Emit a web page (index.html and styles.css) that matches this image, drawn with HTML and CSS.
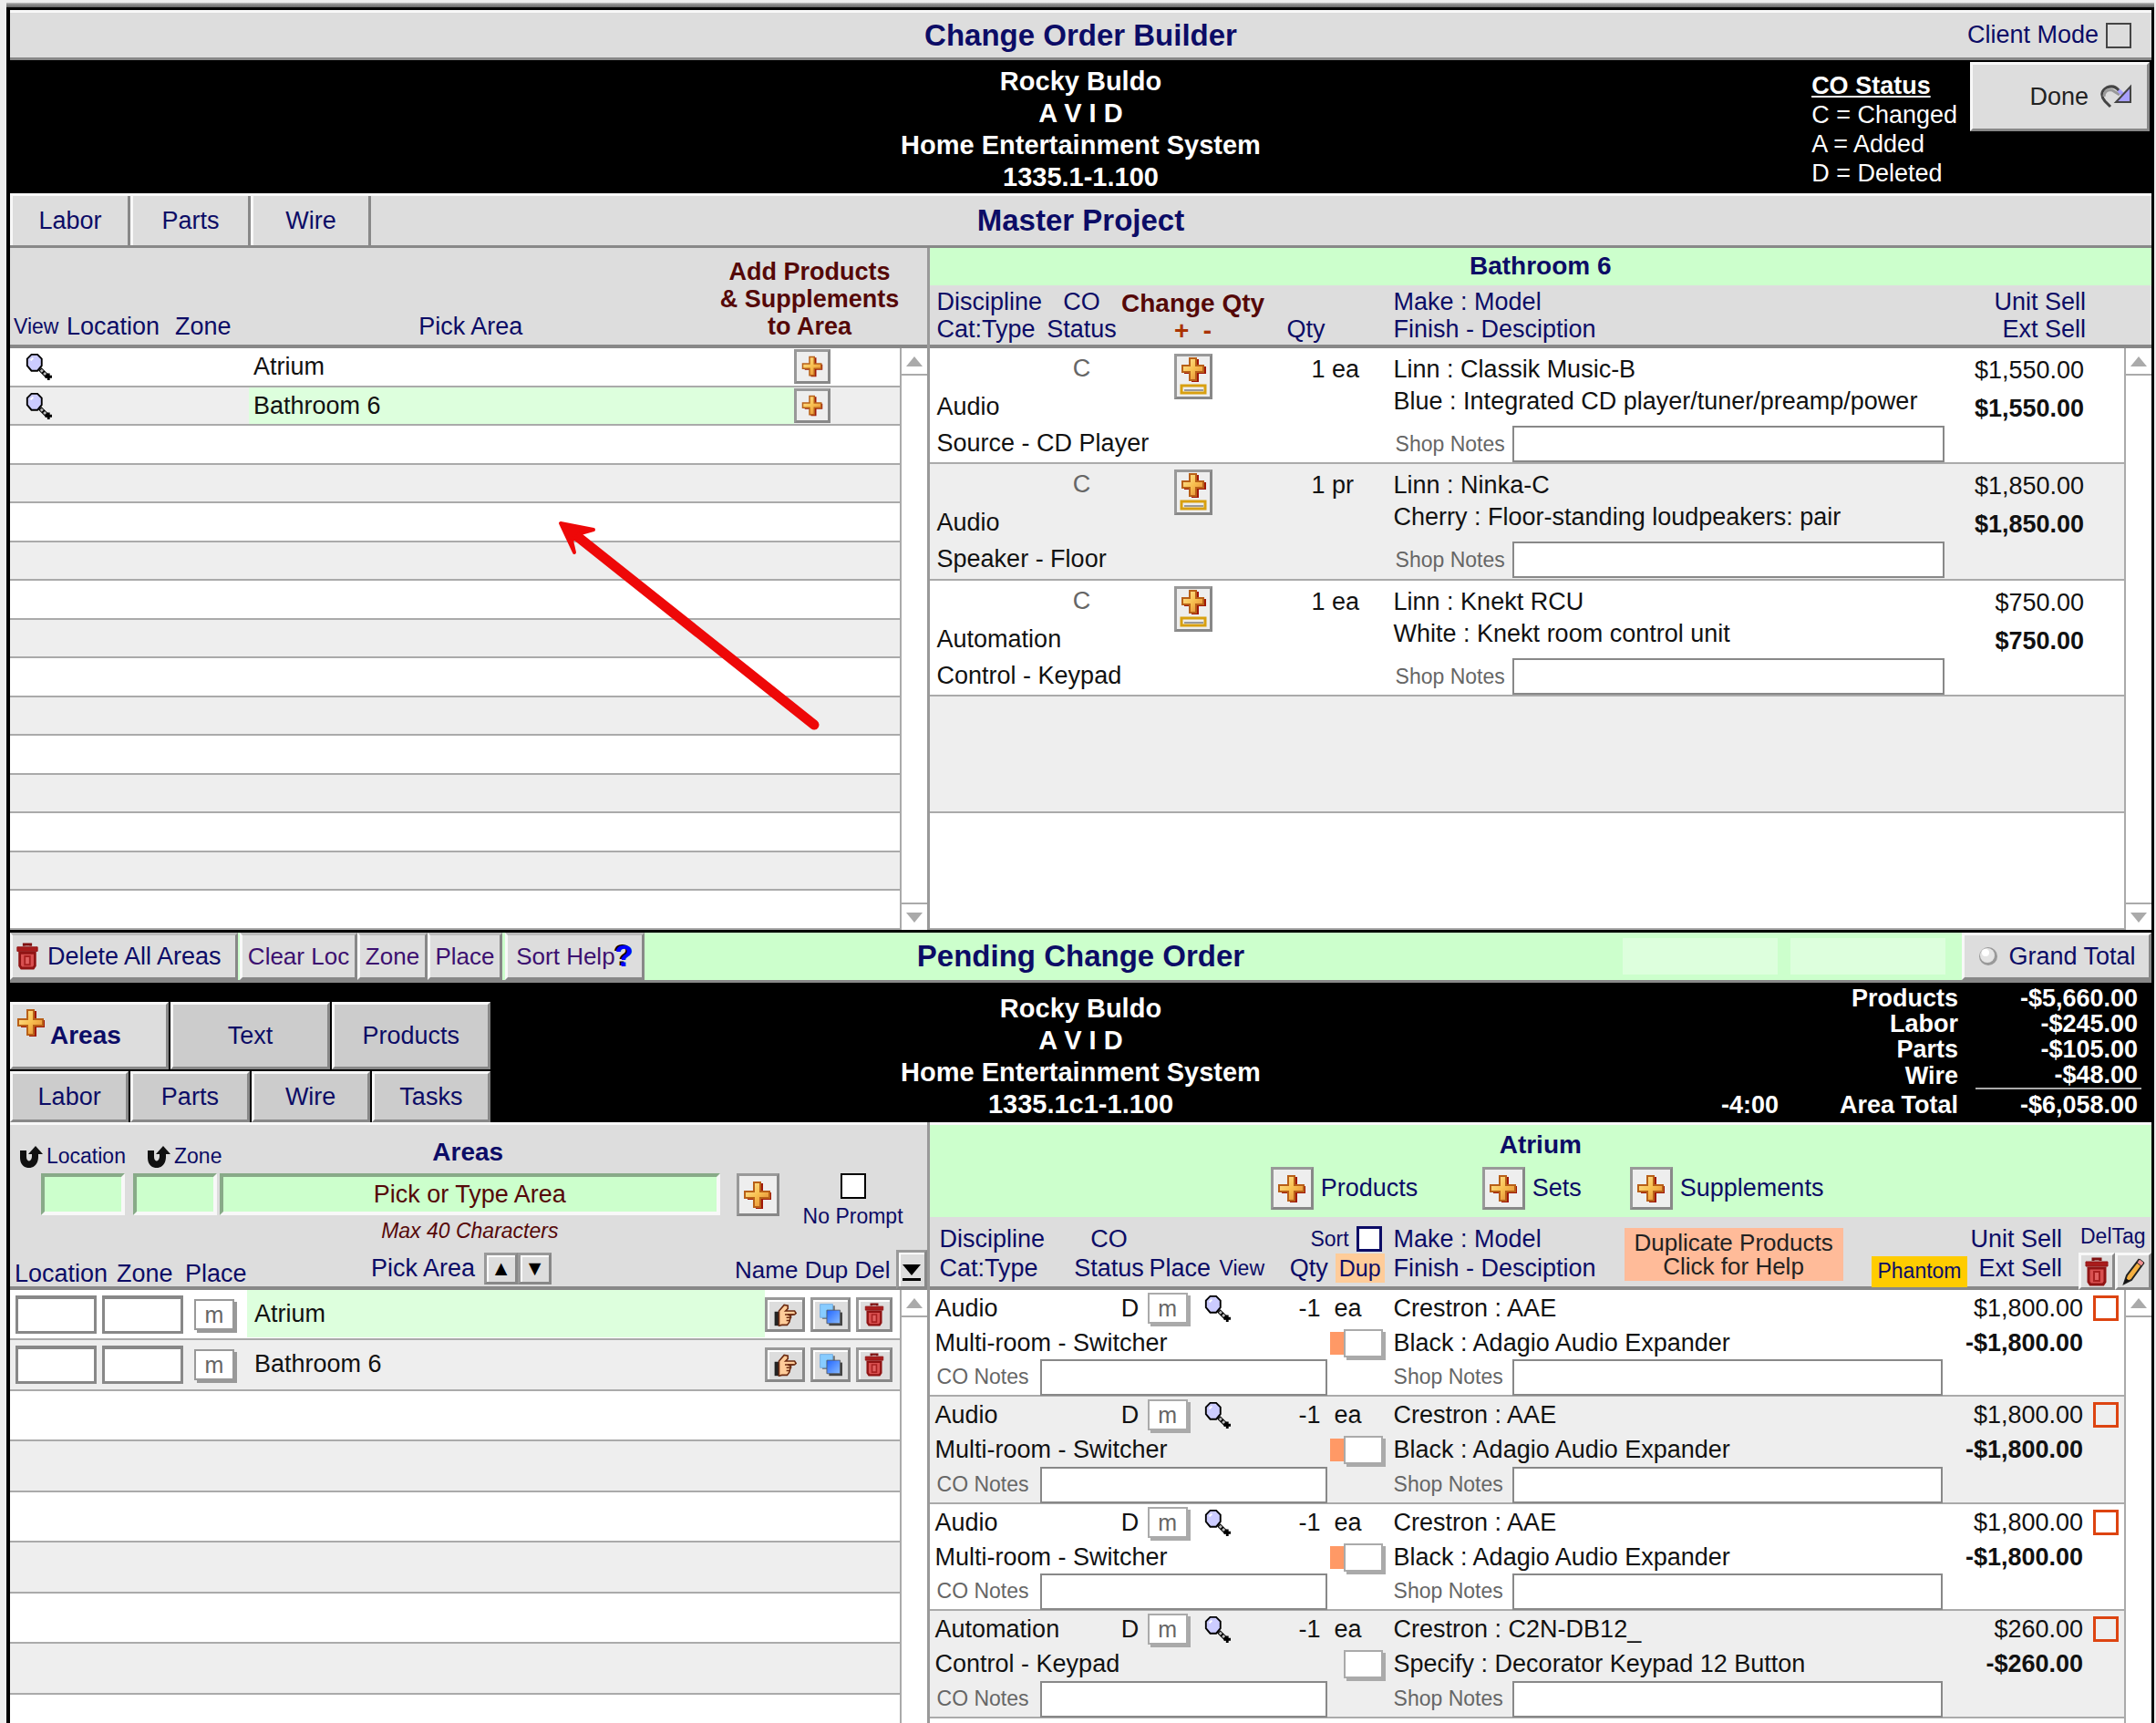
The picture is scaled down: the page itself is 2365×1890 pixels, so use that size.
FILE: index.html
```html
<!DOCTYPE html>
<html lang="en">
<head>
    <meta charset="UTF-8">
    <meta name="viewport" content="width=device-width, initial-scale=1.0">
    <title>Change Order Builder</title>
    <link rel="stylesheet" href="styles.css">
</head>
<body>
    <svg class="sprite" aria-hidden="true">
        <defs>
            <linearGradient id="gold" x1="0" y1="0" x2="1" y2="1">
                <stop offset="0" stop-color="#ffe9a0"/>
                <stop offset="0.5" stop-color="#f8c050"/>
                <stop offset="1" stop-color="#e08030"/>
            </linearGradient>
            <linearGradient id="blue" x1="0" y1="0" x2="1" y2="1">
                <stop offset="0" stop-color="#2266ff"/>
                <stop offset="1" stop-color="#88bbff"/>
            </linearGradient>
        </defs>
        <symbol id="plus" viewBox="0 0 32 32">
            <path d="M14 3h8v10h9v8h-9v10h-8V21H5v-8h9z" fill="#a01808"/>
            <path d="M12 2h7v10h10v7H19v10h-7V19H2v-7h10z" fill="url(#gold)" stroke="#b86018" stroke-width="2"/>
        </symbol>
        <symbol id="plusminus" viewBox="0 0 32 42">
            <path d="M14 2h8v8h8v8h-8v9h-8v-9H6v-8h8z" fill="#a01808"/>
            <path d="M12 1h7v8h8v7h-8v9h-7v-9H4V9h8z" fill="url(#gold)" stroke="#b86018" stroke-width="2"/>
            <path d="M3 31h26v8H3z" fill="#eee" stroke="#d8a010" stroke-width="3"/>
            <path d="M6 36h21" stroke="#999" stroke-width="2"/>
        </symbol>
        <symbol id="glass" viewBox="0 0 32 32">
            <path d="M18 19l9 9" stroke="#000" stroke-width="5"/>
            <path d="M19 20l7 7" stroke="#bbb" stroke-width="3" stroke-dasharray="3 2"/>
            <path d="M28 24v8M24 28h8" stroke="#000" stroke-width="3"/>
            <path d="M8 2h7l5 5v8l-5 6H8l-5-6V7z" fill="#ccccff" stroke="#000" stroke-width="2"/>
            <path d="M7 9l3-3" stroke="#fff" stroke-width="2"/>
        </symbol>
        <symbol id="trash" viewBox="0 0 28 32">
            <path d="M10 4V2h8v2" fill="none" stroke="#801010" stroke-width="3"/>
            <path d="M2 5h24v5H2z" fill="#a81c1c" stroke="#901414" stroke-width="1"/>
            <path d="M5 12h18v15l-2 3H7l-2-3z" fill="#d85050" stroke="#901414" stroke-width="3"/>
            <path d="M11 16h6v10h-6z" fill="#e06060" stroke="#a82020" stroke-width="2"/>
        </symbol>
        <symbol id="hand" viewBox="0 0 32 32">
            <path d="M2 12h6v19H2z" fill="#222"/>
            <path d="M8 11l7-8 5 1v4l-3 3h12l2 3-2 2H20l4 2-1 4-1 4-3 4h-7l-4 1z" fill="#ffcc99" stroke="#6b2a10" stroke-width="2"/>
            <path d="M16 16h12M18 20h7M18 24h5" stroke="#6b2a10" stroke-width="2"/>
        </symbol>
        <symbol id="dup" viewBox="0 0 32 32">
            <path d="M5 4h17v18H5z" fill="#777"/>
            <path d="M2 2h17v18H2z" fill="#88ccff" stroke="#6aa8e0" stroke-width="1"/>
            <path d="M14 13h18v18H14z" fill="#444"/>
            <path d="M11 10h18v18H11z" fill="url(#blue)" stroke="#555" stroke-width="1"/>
        </symbol>
        <symbol id="pencil" viewBox="0 0 28 32">
            <path d="M4 29l3-9L20 3l5 4-13 18z" fill="#f5b040" stroke="#222" stroke-width="2"/>
            <path d="M18 6l3-4 5 4-3 4z" fill="#f09090" stroke="#222" stroke-width="1"/>
            <path d="M4 29l2-6 4 3z" fill="#111"/>
        </symbol>
        <symbol id="back" viewBox="0 0 36 28">
            <path d="M12 25L6 19C1 13 2 7 8 4c5-2 10-1 13 3l5 5" fill="none" stroke="#444" stroke-width="3"/>
            <path d="M5 14c0-5 3-8 9-7l8 5" fill="none" stroke="#999" stroke-width="3"/>
            <path d="M21 7l6 6" stroke="#a8a0ff" stroke-width="4"/>
            <path d="M34 3v17H18z" fill="#a8a0ff" stroke="#444" stroke-width="2"/>
        </symbol>
        <symbol id="uturn" viewBox="0 0 28 24">
            <path d="M2 5h7v7c0 6 6 6 6-1V9h-4l8-9 8 9h-5v3c0 16-20 16-20 1z" fill="#111"/>
        </symbol>
        <symbol id="lamp" viewBox="0 0 24 24">
            <circle cx="12" cy="12" r="10" fill="#999"/>
            <circle cx="11" cy="11" r="8" fill="#e4e4e4"/>
            <circle cx="9" cy="8" r="4" fill="#fff"/>
        </symbol>
    </svg>

    <div class="topstrip"></div>
    <main class="app">
        <header class="bar title-bar">
            <span></span>
            <h1>Change Order Builder</h1>
            <label class="client-mode">Client Mode <input type="checkbox" class="check"></label>
        </header>

        <section class="banner">
            <span></span>
            <div class="project">
                <p>Rocky Buldo</p>
                <p>A V I D</p>
                <p>Home Entertainment System</p>
                <p>1335.1-1.100</p>
            </div>
            <div class="banner-right">
                <div class="legend">
                    <h2>CO Status</h2>
                    <p>C = Changed</p>
                    <p>A = Added</p>
                    <p>D = Deleted</p>
                </div>
                <button class="btn done">Done <svg><use href="#back"/></svg></button>
            </div>
        </section>

        <section class="bar master-bar">
            <nav class="tabs">
                <button class="btn">Labor</button>
                <button class="btn">Parts</button>
                <button class="btn">Wire</button>
            </nav>
            <h1>Master Project</h1>
            <span></span>
        </section>

        <section class="split">
            <div class="panel left">
                <div class="head pick-head">
                    <span class="small">View</span>
                    <span>Location</span>
                    <span>Zone</span>
                    <span class="center">Pick Area</span>
                    <strong>Add Products<br>&amp; Supplements<br>to Area</strong>
                </div>
                <div class="body">
                    <table class="rows pick-rows">
                        <tr><td><button class="icon" aria-label="View"><svg><use href="#glass"/></svg></button></td><td></td><td class="name">Atrium</td><td><button class="btn add" aria-label="Add to Atrium"><svg><use href="#plus"/></svg></button></td></tr>
                        <tr><td><button class="icon" aria-label="View"><svg><use href="#glass"/></svg></button></td><td></td><td class="name picked">Bathroom 6</td><td><button class="btn add" aria-label="Add to Bathroom 6"><svg><use href="#plus"/></svg></button></td></tr>
                        <tr></tr><tr></tr><tr></tr><tr></tr><tr></tr><tr></tr><tr></tr>
                        <tr></tr><tr></tr><tr></tr><tr></tr><tr></tr><tr></tr>
                    </table>
                    <div class="scroll"><button class="up" aria-label="Scroll up"></button><button class="down" aria-label="Scroll down"></button></div>
                    <svg class="pointer" viewBox="0 0 300 240">
                        <path d="M24 20L288 230" stroke="#ee0808" stroke-width="11" stroke-linecap="round"/>
                        <path d="M10 9L46 16L32 20L22 28L25 41Z" fill="#ee0808" stroke="#ee0808" stroke-width="4" stroke-linejoin="round"/>
                    </svg>
                </div>
            </div>

            <div class="panel">
                <h2 class="area-title">Bathroom 6</h2>
                <div class="head master-grid master-head">
                    <span>Discipline<br>Cat:Type</span>
                    <span class="center">CO<br>Status</span>
                    <strong>Change Qty<br><b>+ &nbsp;-</b></strong>
                    <span class="qty"><br>Qty</span>
                    <span>Make : Model<br>Finish - Desciption</span>
                    <span class="right">Unit Sell<br>Ext Sell</span>
                </div>
                <div class="body">
                    <table class="rows master-rows">
                        <tr class="master-grid">
                            <td class="disc">Audio<br>Source - CD Player</td>
                            <td class="status">C</td>
                            <td class="change"><button class="btn pm" aria-label="Change quantity"><svg><use href="#plusminus"/></svg></button></td>
                            <td class="count">1 ea</td>
                            <td class="make">Linn : Classik Music-B<br>Blue : Integrated CD player/tuner/preamp/power
                                <div class="note"><label for="m1">Shop Notes</label><input type="text" id="m1"></div></td>
                            <td class="price">$1,550.00<br><b>$1,550.00</b></td>
                        </tr>
                        <tr class="master-grid">
                            <td class="disc">Audio<br>Speaker - Floor</td>
                            <td class="status">C</td>
                            <td class="change"><button class="btn pm" aria-label="Change quantity"><svg><use href="#plusminus"/></svg></button></td>
                            <td class="count">1 pr</td>
                            <td class="make">Linn : Ninka-C<br>Cherry : Floor-standing loudpeakers: pair
                                <div class="note"><label for="m2">Shop Notes</label><input type="text" id="m2"></div></td>
                            <td class="price">$1,850.00<br><b>$1,850.00</b></td>
                        </tr>
                        <tr class="master-grid">
                            <td class="disc">Automation<br>Control - Keypad</td>
                            <td class="status">C</td>
                            <td class="change"><button class="btn pm" aria-label="Change quantity"><svg><use href="#plusminus"/></svg></button></td>
                            <td class="count">1 ea</td>
                            <td class="make">Linn : Knekt RCU<br>White : Knekt room control unit
                                <div class="note"><label for="m3">Shop Notes</label><input type="text" id="m3"></div></td>
                            <td class="price">$750.00<br><b>$750.00</b></td>
                        </tr>
                        <tr></tr>
                        <tr></tr>
                    </table>
                    <div class="scroll"><button class="up" aria-label="Scroll up"></button><button class="down" aria-label="Scroll down"></button></div>
                </div>
            </div>
        </section>

        <section class="bar pending-bar">
            <nav class="tools">
                <button class="btn delete-all"><svg><use href="#trash"/></svg>Delete All Areas</button>
                <button class="btn clear">Clear Loc</button>
                <button class="btn">Zone</button>
                <button class="btn">Place</button>
                <button class="btn sort-help">Sort Help<b>?</b></button>
            </nav>
            <h1>Pending Change Order</h1>
            <div class="pending-right">
                <span class="blank"></span>
                <span class="blank"></span>
                <button class="btn grand"><svg><use href="#lamp"/></svg>Grand Total</button>
            </div>
        </section>

        <section class="banner pending-banner">
            <nav class="sections">
                <div>
                    <button class="btn current"><svg><use href="#plus"/></svg>Areas</button>
                    <button class="btn">Text</button>
                    <button class="btn">Products</button>
                </div>
                <div>
                    <button class="btn">Labor</button>
                    <button class="btn">Parts</button>
                    <button class="btn">Wire</button>
                    <button class="btn">Tasks</button>
                </div>
            </nav>
            <div class="project">
                <p>Rocky Buldo</p>
                <p>A V I D</p>
                <p>Home Entertainment System</p>
                <p>1335.1c1-1.100</p>
            </div>
            <table class="totals">
                <tr><td></td><th>Products</th><td>-$5,660.00</td></tr>
                <tr><td></td><th>Labor</th><td>-$245.00</td></tr>
                <tr><td></td><th>Parts</th><td>-$105.00</td></tr>
                <tr><td></td><th>Wire</th><td>-$48.00</td></tr>
                <tr class="sum"><td>-4:00</td><th>Area Total</th><td>-$6,058.00</td></tr>
            </table>
        </section>

        <section class="split pending">
            <div class="panel left">
                <div class="head area-head">
                    <div class="area-labels">
                        <label for="loc"><svg><use href="#uturn"/></svg>Location</label>
                        <label for="zone"><svg><use href="#uturn"/></svg>Zone</label>
                        <h2>Areas</h2>
                    </div>
                    <div class="area-form">
                        <input type="text" id="loc">
                        <input type="text" id="zone">
                        <div class="area-name">
                            <input type="text" value="Pick or Type Area" aria-label="Area">
                            <em>Max 40 Characters</em>
                        </div>
                        <button class="btn big-add" aria-label="Add area"><svg><use href="#plus"/></svg></button>
                        <label class="prompt"><input type="checkbox" class="check">No Prompt</label>
                    </div>
                    <div class="area-cols">
                        <span>Location</span>
                        <span>Zone</span>
                        <span>Place</span>
                        <div class="pick">Pick Area
                            <button class="btn" aria-label="Sort up">&#9650;</button><button class="btn" aria-label="Sort down">&#9660;</button>
                        </div>
                        <span class="actions">Name Dup Del</span>
                        <button class="btn last" aria-label="Go to last"><i></i></button>
                    </div>
                </div>
                <div class="body">
                    <table class="rows area-rows">
                        <tr>
                            <td><input type="text" aria-label="Location"></td><td><input type="text" aria-label="Zone"></td>
                            <td><button class="m">m</button></td><td class="name picked">Atrium</td>
                            <td class="acts"><button class="btn" aria-label="Name"><svg><use href="#hand"/></svg></button><button class="btn" aria-label="Duplicate"><svg><use href="#dup"/></svg></button><button class="btn" aria-label="Delete"><svg><use href="#trash"/></svg></button></td>
                        </tr>
                        <tr>
                            <td><input type="text" aria-label="Location"></td><td><input type="text" aria-label="Zone"></td>
                            <td><button class="m">m</button></td><td class="name">Bathroom 6</td>
                            <td class="acts"><button class="btn" aria-label="Name"><svg><use href="#hand"/></svg></button><button class="btn" aria-label="Duplicate"><svg><use href="#dup"/></svg></button><button class="btn" aria-label="Delete"><svg><use href="#trash"/></svg></button></td>
                        </tr>
                        <tr></tr><tr></tr><tr></tr><tr></tr><tr></tr><tr></tr><tr></tr>
                    </table>
                    <div class="scroll"><button class="up" aria-label="Scroll up"></button></div>
                </div>
            </div>

            <div class="panel">
                <div class="area-title product-title">
                    <h2>Atrium</h2>
                    <div class="adders">
                        <label><button class="btn big-add"><svg><use href="#plus"/></svg></button>Products</label>
                        <label><button class="btn big-add"><svg><use href="#plus"/></svg></button>Sets</label>
                        <label><button class="btn big-add"><svg><use href="#plus"/></svg></button>Supplements</label>
                    </div>
                </div>
                <div class="head product-head">
                    <span>Discipline<br>Cat:Type</span>
                    <span class="center">CO<br>Status</span>
                    <span><br>Place</span>
                    <span class="view"><br>View</span>
                    <div class="sort">
                        <label>Sort <input type="checkbox" class="check"></label>
                        <p>Qty <a href="#dups">Dup</a></p>
                    </div>
                    <span>Make : Model<br>Finish - Desciption</span>
                    <button class="dup-help">Duplicate Products<br>Click for Help</button>
                    <span class="phantom">Phantom</span>
                    <span class="sell">Unit Sell<br>Ext Sell</span>
                    <div class="deltag">
                        <span>DelTag</span>
                        <button class="btn" aria-label="Delete tagged"><svg><use href="#trash"/></svg></button><button class="btn" aria-label="Edit tagged"><svg><use href="#pencil"/></svg></button>
                    </div>
                </div>
                <div class="body">
                    <table class="rows product-rows">
                        <tr>
                            <td>Audio</td><td>D</td><td><button class="m">m</button></td>
                            <td><button class="icon" aria-label="View"><svg><use href="#glass"/></svg></button></td>
                            <td class="count">-1 &nbsp;ea</td><td>Crestron : AAE</td><td class="price">$1,800.00</td>
                            <td class="tag"><input type="checkbox" class="check" aria-label="Tag"></td>
                            <td class="type">Multi-room - Switcher</td>
                            <td class="dupe"><i></i><input type="text" aria-label="Duplicate"></td>
                            <td>Black : Adagio Audio Expander</td><td class="price"><b>-$1,800.00</b></td>
                            <td class="note co"><label for="c1">CO Notes</label><input type="text" id="c1"></td>
                            <td class="note shop"><label for="s1">Shop Notes</label><input type="text" id="s1"></td>
                        </tr>
                        <tr>
                            <td>Audio</td><td>D</td><td><button class="m">m</button></td>
                            <td><button class="icon" aria-label="View"><svg><use href="#glass"/></svg></button></td>
                            <td class="count">-1 &nbsp;ea</td><td>Crestron : AAE</td><td class="price">$1,800.00</td>
                            <td class="tag"><input type="checkbox" class="check" aria-label="Tag"></td>
                            <td class="type">Multi-room - Switcher</td>
                            <td class="dupe"><i></i><input type="text" aria-label="Duplicate"></td>
                            <td>Black : Adagio Audio Expander</td><td class="price"><b>-$1,800.00</b></td>
                            <td class="note co"><label for="c2">CO Notes</label><input type="text" id="c2"></td>
                            <td class="note shop"><label for="s2">Shop Notes</label><input type="text" id="s2"></td>
                        </tr>
                        <tr>
                            <td>Audio</td><td>D</td><td><button class="m">m</button></td>
                            <td><button class="icon" aria-label="View"><svg><use href="#glass"/></svg></button></td>
                            <td class="count">-1 &nbsp;ea</td><td>Crestron : AAE</td><td class="price">$1,800.00</td>
                            <td class="tag"><input type="checkbox" class="check" aria-label="Tag"></td>
                            <td class="type">Multi-room - Switcher</td>
                            <td class="dupe"><i></i><input type="text" aria-label="Duplicate"></td>
                            <td>Black : Adagio Audio Expander</td><td class="price"><b>-$1,800.00</b></td>
                            <td class="note co"><label for="c3">CO Notes</label><input type="text" id="c3"></td>
                            <td class="note shop"><label for="s3">Shop Notes</label><input type="text" id="s3"></td>
                        </tr>
                        <tr>
                            <td>Automation</td><td>D</td><td><button class="m">m</button></td>
                            <td><button class="icon" aria-label="View"><svg><use href="#glass"/></svg></button></td>
                            <td class="count">-1 &nbsp;ea</td><td>Crestron : C2N-DB12_</td><td class="price">$260.00</td>
                            <td class="tag"><input type="checkbox" class="check" aria-label="Tag"></td>
                            <td class="type">Control - Keypad</td>
                            <td class="dupe"><input type="text" aria-label="Duplicate"></td>
                            <td>Specify : Decorator Keypad 12 Button</td><td class="price"><b>-$260.00</b></td>
                            <td class="note co"><label for="c4">CO Notes</label><input type="text" id="c4"></td>
                            <td class="note shop"><label for="s4">Shop Notes</label><input type="text" id="s4"></td>
                        </tr>
                    </table>
                    <div class="scroll"><button class="up" aria-label="Scroll up"></button></div>
                </div>
            </div>
        </section>
    </main>
</body>
</html>
```
FILE: styles.css
```css
* {
    box-sizing: border-box;
}
body {
    margin: 0;
    padding: 0 2px 0 7px;
    height: 100vh;
    display: flex;
    flex-direction: column;
    overflow: hidden;
    background: #eee;
    color: #111;
    font-family: "Liberation Sans", Arial, sans-serif;
    font-size: 27px;
    white-space: nowrap;
}
h1, h2, p {
    margin: 0;
}
h1 {
    font-size: 33px;
    line-height: 40px;
    color: #0c0c66;
}
h2 {
    font-size: 28px;
    line-height: 40px;
    color: #0c0c66;
}
button, input {
    font-family: inherit;
    font-size: inherit;
    color: inherit;
    margin: 0;
    padding: 0;
    border-radius: 0;
    min-width: 0;
}
svg {
    display: block;
    flex: none;
}
.sprite {
    position: absolute;
    width: 0;
    height: 0;
}
.center {
    text-align: center;
}
.right {
    text-align: right;
}
.topstrip {
    flex: none;
    height: 8px;
    background: linear-gradient(#eee 30%, #999 50%, #666);
}
.app {
    flex: 1;
    min-height: 0;
    display: flex;
    flex-direction: column;
    border: solid #000;
    border-width: 3px 3px 0 4px;
    background: #000;
}

/* buttons and small controls */
.btn {
    display: flex;
    align-items: center;
    justify-content: center;
    background: #ddd;
    color: #0c0c66;
    border: 3px solid;
    border-color: #f8f8f8 #888 #888 #f8f8f8;
    cursor: pointer;
}
.icon {
    display: block;
    background: none;
    border: none;
}
.icon svg {
    width: 30px;
    height: 30px;
}
.check {
    appearance: none;
    flex: none;
    width: 28px;
    height: 28px;
    border: 2px solid #000;
    background: #fff;
}
.add, .big-add, .pm {
    background: #eee;
    border-color: #999 #888 #888 #999;
}
.add {
    width: 40px;
    height: 38px;
}
.add svg {
    width: 24px;
    height: 24px;
}
.big-add {
    flex: none;
    width: 47px;
    height: 47px;
}
.big-add svg {
    width: 32px;
    height: 32px;
}
.m {
    width: 44px;
    height: 34px;
    font-size: 25px;
    line-height: 28px;
    color: #666;
    background: #fff;
    border: 2px solid #999;
    box-shadow: 3px 3px 0 #999;
}

/* bars */
.bar {
    flex: none;
    display: grid;
    grid-template-columns: 1fr auto 1fr;
    align-items: center;
    background: #ddd;
    border-top: 3px solid #f8f8f8;
    border-bottom: 3px solid #888;
}
.title-bar {
    height: 55px;
}
.client-mode {
    display: flex;
    justify-content: flex-end;
    align-items: center;
    gap: 8px;
    padding-right: 22px;
    color: #0c0c66;
}
.client-mode .check {
    border-color: #444;
    background: #ddd;
}
.master-bar {
    height: 60px;
    align-items: stretch;
}
.master-bar h1 {
    align-self: center;
}
.tabs {
    display: flex;
}
.tabs .btn {
    width: 132px;
    border-top: none;
    border-bottom: none;
}

/* black banners */
.banner {
    flex: none;
    min-height: 146px;
    display: grid;
    grid-template-columns: 1fr auto 1fr;
    background: #000;
    color: #fff;
}
.project {
    padding-top: 6px;
    text-align: center;
    font-size: 29px;
    font-weight: bold;
    line-height: 35px;
}
.banner-right {
    display: flex;
    justify-content: flex-end;
    align-items: flex-start;
    gap: 14px;
    padding: 2px 2px 0 0;
}
.legend {
    padding-top: 10px;
    line-height: 32px;
}
.legend h2 {
    font-size: 27px;
    line-height: 32px;
    color: #fff;
    text-decoration: underline;
}
.done {
    width: 197px;
    height: 76px;
    justify-content: flex-end;
    gap: 12px;
    padding-right: 16px;
    color: #222;
}
.done svg {
    width: 36px;
    height: 28px;
}

/* two-column area */
.split {
    flex: none;
    display: grid;
    grid-template-columns: minmax(0, 1009fr) minmax(0, 1341fr);
}
.panel {
    display: flex;
    flex-direction: column;
    min-height: 0;
    background: #fff;
}
.left {
    border-right: 3px solid #999;
}
.head {
    flex: none;
    background: #ddd;
    color: #0c0c66;
    border-bottom: 4px solid #888;
}
.head strong {
    text-align: center;
    color: #550808;
}
.small {
    font-size: 23px;
}
.area-title {
    background: #ccffcc;
    text-align: center;
}
.body {
    flex: 1;
    display: flex;
    position: relative;
    min-height: 0;
}
.rows {
    flex: 1;
    display: block;
    border-collapse: collapse;
}
.rows tbody {
    display: block;
}
.rows tr {
    display: block;
    border-bottom: 2px solid #aaa;
}
.rows tr:nth-child(even) {
    background: #eee;
}
.rows td {
    display: block;
    padding: 0;
}
.scroll {
    width: 30px;
    display: flex;
    flex-direction: column;
    justify-content: space-between;
    border-left: 2px solid #aaa;
    background: #fff;
}
.scroll button {
    height: 30px;
    background: #fff;
    border: 0 solid #aaa;
    display: flex;
    align-items: center;
    justify-content: center;
}
.scroll .up {
    border-bottom-width: 2px;
}
.scroll .down {
    border-top-width: 2px;
}
.scroll button::before {
    content: "";
    border: 9px solid transparent;
    border-top-width: 0;
    border-bottom: 11px solid #aaa;
}
.scroll .down::before {
    border-bottom-width: 0;
    border-top: 11px solid #aaa;
}

/* master project, area list */
.pick-head {
    display: grid;
    grid-template-columns: 58px 119px 81px 1fr 257px;
    align-items: end;
    height: 110px;
    padding: 0 0 5px 4px;
    line-height: 30px;
}
.pick-rows {
    display: grid;
}
.pick-rows tbody {
    display: grid;
    grid-template-rows: repeat(15, 1fr);
}
.pick-rows tr {
    display: grid;
    grid-template-columns: 63px 199px 1fr 116px;
    align-items: center;
}
.pick-rows td:first-child {
    padding-left: 16px;
}
.name {
    padding-left: 5px !important;
    align-self: stretch;
    line-height: 40px;
}
.picked {
    background: #ddffdd;
}
.pointer {
    position: absolute;
    left: 594px;
    top: 183px;
    width: 300px;
    height: 240px;
}

/* master project, product list */
.split > .panel > h2.area-title {
    height: 41px;
}
.master-grid {
    display: grid;
    grid-template-columns: 118px 82px 162px 139px 1fr 150px;
    padding: 0 44px 0 8px;
}
.master-head {
    height: 69px;
    padding: 3px 72px 0 8px;
    line-height: 30px;
}
.master-head strong {
    font-size: 28px;
    padding-top: 2px;
}
.master-head b {
    color: #aa3300;
}
.qty {
    padding-left: 22px;
}
.master-rows tr {
    height: 127px;
}
.master-rows tr:nth-child(even), .master-rows tr:last-child {
    height: 128px;
}
.master-rows .master-grid {
    display: grid;
    grid-template-rows: 44px 1fr;
}
.master-rows td {
    grid-row: 1 / 3;
}
.master-rows .disc {
    grid-area: 2 / 1 / 3 / 3;
    line-height: 40px;
}
.master-rows .status {
    grid-area: 1 / 2;
    text-align: center;
    line-height: 44px;
    color: #666;
}
.change {
    padding-top: 6px !important;
}
.pm {
    width: 42px;
    height: 50px;
    margin: 0 auto;
}
.pm svg {
    width: 32px;
    height: 42px;
}
.master-rows .count {
    padding: 6px 0 0 49px;
    line-height: 35px;
}
.make {
    padding: 6px 3px 0 0 !important;
    line-height: 35px;
}
.make .note {
    margin-top: 9px;
}
.note {
    display: flex !important;
    align-items: center;
    font-size: 23px;
    color: #666;
}
.note label {
    flex: none;
    width: 130px;
    padding-left: 2px;
}
.note input {
    flex: 1;
    height: 40px;
    border: 2px solid #888;
    background: #fff;
}
.price {
    text-align: right;
}
.master-rows .price {
    padding-top: 3px;
    line-height: 42px;
}

/* pending change order */
.pending-bar {
    height: 55px;
    align-items: stretch;
    margin-top: 3px;
    background: #ccffcc;
    border-top: none;
}
.pending-bar h1 {
    align-self: center;
}
.tools {
    display: flex;
    font-size: 26px;
}
.tools .btn {
    color: #3c1070;
    padding: 0;
    border-top-color: #bbb;
}
.tools .delete-all {
    width: 250px;
    justify-content: flex-start;
    margin-right: 2px;
    padding-left: 3px;
    gap: 9px;
    font-size: 27px;
    color: #0c0c66;
}
.delete-all svg {
    width: 26px;
    height: 30px;
}
.tools .clear {
    width: 129px;
}
.tools .btn:nth-child(3) {
    width: 77px;
}
.tools .btn:nth-child(4) {
    width: 82px;
    margin-right: 3px;
}
.tools .sort-help {
    width: 153px;
}
.sort-help b {
    font-size: 33px;
    color: #0000ff;
    text-shadow: -2px -1px 0 #000;
}
.pending-right {
    display: flex;
    justify-content: flex-end;
    gap: 14px;
}
.blank {
    width: 170px;
    margin: 6px 0;
    background: #ddffdd;
}
.grand {
    width: 208px;
    gap: 10px;
    margin-left: 4px;
}
.grand svg {
    width: 24px;
    height: 24px;
}
.pending-banner {
    min-height: 153px;
}
.pending-banner .project {
    padding-top: 11px;
}
.sections {
    display: flex;
    flex-direction: column;
    gap: 2px;
    width: 527px;
    padding-top: 21px;
}
.sections div {
    display: flex;
    gap: 2px;
}
.sections .btn {
    flex: 1;
    height: 56px;
    background: #ccc;
}
.sections div:first-child .btn {
    height: 74px;
}
.sections .current {
    justify-content: flex-start;
    padding: 0;
    gap: 5px;
    background: #ddd;
    font-size: 28px;
    font-weight: bold;
}
.current svg {
    width: 32px;
    height: 32px;
    align-self: flex-start;
    margin: 4px 0 0 4px;
}
.totals {
    justify-self: end;
    align-self: start;
    margin: 3px 11px 0 0;
    border-collapse: collapse;
    font-weight: bold;
    line-height: 28px;
    text-align: right;
}
.totals td, .totals th {
    padding: 0;
    text-align: right;
}
.totals tr:not(.sum) > * {
    height: 28px;
}
.totals th {
    width: 197px;
    padding-right: 19px;
    box-sizing: content-box;
}
.totals td:last-child {
    width: 182px;
    padding-right: 4px;
}
.totals .sum td, .totals .sum th {
    line-height: 35px;
}
.totals .sum td:last-child {
    border-top: 2px solid #aaa;
}
.pending {
    flex: 1;
    min-height: 0;
    grid-template-rows: minmax(0, 1fr);
}
.pending .body {
    overflow: hidden;
}

/* pending, area list */
.area-head {
    height: 184px;
    border-top: 3px solid #f8f8f8;
}
.area-labels {
    display: flex;
    align-items: center;
    height: 53px;
    padding-right: 230px;
}
.area-labels label {
    display: flex;
    align-items: center;
    gap: 3px;
    width: 80px;
    padding-top: 16px;
    font-size: 23px;
}
.area-labels label:first-child {
    width: 149px;
    padding-left: 9px;
}
.area-labels svg {
    width: 28px;
    height: 24px;
}
.area-labels h2 {
    flex: 1;
    padding-top: 6px;
    text-align: center;
}
.area-form {
    display: flex;
    align-items: flex-start;
    height: 78px;
    padding-left: 34px;
}
.area-form input[type="text"] {
    width: 92px;
    height: 46px;
    margin-right: 9px;
    background: #ccffcc;
    border: 4px solid;
    border-color: #88aa88 #f8f8f8 #f8f8f8 #88aa88;
    color: #550808;
    text-align: center;
}
.area-form #zone {
    margin-right: 3px;
}
.area-name {
    flex: 1;
    display: flex;
    flex-direction: column;
    align-items: center;
    margin-right: 18px;
}
.area-form .area-name input {
    width: 100%;
    margin: 0;
}
.area-name em {
    font-size: 23px;
    line-height: 34px;
    color: #550808;
}
.prompt {
    width: 162px;
    display: flex;
    flex-direction: column;
    align-items: center;
    gap: 6px;
    font-size: 23px;
}
.area-cols {
    display: flex;
    align-items: flex-end;
    height: 49px;
    padding-left: 5px;
    line-height: 34px;
}
.area-cols > span:nth-child(1) {
    width: 112px;
}
.area-cols > span:nth-child(2) {
    width: 75px;
}
.area-cols > span:nth-child(3) {
    width: 204px;
}
.pick {
    flex: 1;
    display: flex;
    padding-bottom: 5px;
}
.pick .btn, .last, .acts .btn {
    border-color: #999 #888 #888 #999;
    box-shadow: inset 2px 2px 0 #fff;
}
.pick .btn {
    width: 37px;
    height: 35px;
    font-size: 23px;
    color: #000;
}
.pick .btn:first-of-type {
    margin-left: 10px;
}
.area-cols .actions {
    padding-bottom: 4px;
    margin-right: 6px;
    font-size: 26px;
}
.last {
    width: 34px;
    height: 43px;
}
.last i {
    border: 10px solid transparent;
    border-top: 12px solid #000;
    border-bottom: none;
    position: relative;
}
.last i::after {
    content: "";
    position: absolute;
    left: -10px;
    top: 3px;
    width: 20px;
    height: 3px;
    background: #000;
}
.area-rows tr {
    display: grid;
    grid-template-columns: 95px 101px 64px 1fr 148px;
    align-items: center;
    height: 55px;
}
.area-rows tr:nth-child(even) {
    height: 56px;
}
.area-rows td:first-child, .area-rows td:nth-child(2) {
    padding-left: 6px;
}
.area-rows input {
    display: block;
    width: 89px;
    height: 42px;
    border: 3px solid #888;
    border-top-width: 4px;
    background: #fff;
}
.area-rows .m {
    display: block;
    margin-left: 6px;
}
.area-rows .name {
    padding-left: 8px !important;
    line-height: 52px;
    margin-bottom: 2px;
}
.area-rows .acts {
    display: flex;
    gap: 6px;
}
.acts .btn {
    width: 44px;
    height: 38px;
}
.acts .btn:last-child {
    width: 40px;
}
.acts svg {
    width: 26px;
    height: 26px;
}

/* pending, product list */
.product-title {
    flex: none;
    height: 104px;
    border-top: 3px solid #f8f8f8;
    padding-top: 2px;
}
.adders {
    display: grid;
    grid-template-columns: 232px 162px 210px;
    justify-content: center;
    padding: 4px 0 0 12px;
    color: #0c0c66;
}
.adders label {
    display: flex;
    align-items: center;
    gap: 8px;
}
.product-head {
    display: grid;
    grid-template-columns: 142px 88px 77px 52px 139px 253px 1fr 105px 106px 96px;
    height: 80px;
    padding: 8px 0 0 11px;
    line-height: 32px;
}
.view {
    font-size: 23px;
}
.sell {
    padding-right: 2px;
    text-align: right;
}
.sort label {
    display: flex;
    align-items: center;
    justify-content: flex-end;
    gap: 8px;
    height: 32px;
    padding-right: 13px;
    font-size: 23px;
}
.sort .check {
    border: 3px solid #0c0c66;
}
.sort p {
    display: flex;
    justify-content: flex-end;
    gap: 8px;
    padding-right: 10px;
}
.sort a {
    padding: 0 4px;
    background: #ffcc99;
    color: #0c0c66;
    font-size: 25px;
    text-decoration: none;
}
.dup-help {
    align-self: start;
    width: 240px;
    height: 58px;
    margin-top: 4px;
    border: none;
    background: #ffbb99;
    color: #222;
    font-size: 26px;
    line-height: 26px;
}
.phantom {
    align-self: end;
    height: 34px;
    margin-bottom: 3px;
    background: #ffcc00;
    font-size: 23px;
    text-align: center;
}
.deltag {
    display: flex;
    flex-wrap: wrap;
    justify-content: flex-end;
    align-content: flex-end;
    font-size: 23px;
    line-height: 27px;
}
.deltag span {
    width: 75px;
    margin: 0 3px 4px 0;
}
.deltag .btn {
    width: 40px;
    height: 41px;
}
.deltag svg {
    width: 28px;
    height: 32px;
}
.product-rows tr {
    display: grid;
    grid-template-columns: 200px 28px 54px 54px 167px 1fr 152px 45px;
    grid-template-rows: 40px 36px 39px;
    align-items: center;
    height: 117px;
    padding-left: 6px;
}
.product-rows tr:nth-child(even) {
    height: 118px;
    grid-template-rows: 40px 37px 39px;
}
.product-rows td:nth-child(2) {
    text-align: center;
}
.product-rows .m {
    display: block;
    margin-left: 5px;
    border-color: #aaa;
    box-shadow: 3px 3px 0 #aaa;
}
.product-rows .icon {
    margin: 0 auto;
}
.product-rows .count {
    padding-right: 35px;
    text-align: right;
}
.product-rows .type {
    grid-column: 1 / 5;
    text-align: left;
}
.tag {
    padding-left: 11px !important;
}
.tag .check {
    display: block;
    border: 3px solid #dd4411;
    background: none;
}
.product-rows .dupe {
    display: flex;
    justify-content: flex-end;
    align-items: center;
    padding-right: 12px;
}
.dupe i {
    width: 15px;
    height: 25px;
    background: #ff9966;
}
.dupe input {
    width: 43px;
    height: 31px;
    border: 2px solid #aaa;
    background: #fff;
    box-shadow: 3px 3px 0 #aaa;
}
.product-rows .co {
    grid-area: 3 / 1 / 4 / 6;
    padding-right: 73px;
}
.co label {
    width: 115px;
}
.product-rows .shop {
    grid-area: 3 / 6;
    padding-right: 2px;
}
.shop label {
    padding-left: 0;
}
```
